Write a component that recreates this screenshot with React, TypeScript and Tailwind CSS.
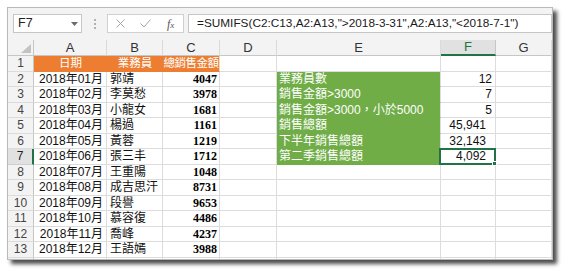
import React from "react";

const rows: [string, string, string][] = [
  ["2018年01月", "郭靖", "4047"],
  ["2018年02月", "李莫愁", "3978"],
  ["2018年03月", "小龍女", "1681"],
  ["2018年04月", "楊過", "1161"],
  ["2018年05月", "黃蓉", "1219"],
  ["2018年06月", "張三丰", "1712"],
  ["2018年07月", "王重陽", "1048"],
  ["2018年08月", "成吉思汗", "8731"],
  ["2018年09月", "段譽", "9653"],
  ["2018年10月", "慕容復", "4486"],
  ["2018年11月", "喬峰", "4237"],
  ["2018年12月", "王語嫣", "3988"],
];

const summary: [string, string, boolean][] = [
  ["業務員數", "12", false],
  ["銷售金額>3000", "7", false],
  ["銷售金額>3000，小於5000", "5", false],
  ["銷售總額", "45,941", true],
  ["下半年銷售總額", "32,143", true],
  ["第二季銷售總額", "4,092", true],
];

const cols = ["A", "B", "C", "D", "E", "F", "G"];

const cell = "border-r border-b border-[#dcdcdc] flex items-center overflow-hidden whitespace-nowrap";

export default function App() {
  const body: React.ReactNode[] = [];
  for (let r = 1; r <= 14; r++) {
    const selRow = r === 7;
    body.push(
      <div
        key={`h${r}`}
        className={
          selRow
            ? "bg-[#e1e1e1] border-b border-[#cfcfcf] border-r-2 border-r-[#217346] flex items-center justify-center text-[12px] text-[#222]"
            : "bg-[#f3f3f3] border-b border-[#dcdcdc] border-r border-r-[#c6c6c6] flex items-center justify-center text-[12px] text-[#444]"
        }
      >
        {r <= 13 ? r : ""}
      </div>
    );
    if (r === 1) {
      body.push(
        <div key="a1" className="bg-[#ed7d31] border-b border-[#ed7d31] flex items-center justify-center text-white text-[11.5px] whitespace-nowrap">日期</div>,
        <div key="b1" className="bg-[#ed7d31] border-b border-[#ed7d31] flex items-center justify-center text-white text-[11.5px] whitespace-nowrap">業務員</div>,
        <div key="c1" className="bg-[#ed7d31] border-b border-[#ed7d31] border-r border-r-[#dcdcdc] flex items-center justify-center text-white text-[11.5px] tracking-[-0.5px] whitespace-nowrap overflow-hidden">總銷售金額</div>
      );
    } else if (r <= 13) {
      const d = rows[r - 2];
      body.push(
        <div key={`a${r}`} className={`${cell} justify-end pr-[3px] text-[12px] text-[#111]`}>{d[0]}</div>,
        <div key={`b${r}`} className={`${cell} pl-[3px] text-[12px] text-[#111]`}>{d[1]}</div>,
        <div key={`c${r}`} className={`${cell} justify-end pr-[2px] text-[12px] font-bold text-black font-['Liberation_Serif',serif]`}>{d[2]}</div>
      );
    } else {
      body.push(
        <div key={`a${r}`} className={cell}></div>,
        <div key={`b${r}`} className={cell}></div>,
        <div key={`c${r}`} className={cell}></div>
      );
    }
    body.push(<div key={`d${r}`} className={cell}></div>);
    if (r >= 2 && r <= 7) {
      const s = summary[r - 2];
      body.push(
        <div key={`e${r}`} className="bg-[#70ad47] border-b border-[#70ad47] border-r border-r-[#dcdcdc] flex items-center pl-[2px] text-white text-[12px] whitespace-nowrap">
          {s[0]}
        </div>
      );
      body.push(
        <div key={`f${r}`} className={`${cell} relative justify-end ${s[2] ? "pr-[9px]" : "pr-[3px]"} text-[12px] text-[#111] overflow-visible`}>
          {s[1]}
          {r === 7 && (
            <div className="absolute -left-[2px] -top-[1px] -right-[1px] -bottom-[1px] border-2 border-[#217346]">
              <div className="absolute -right-[3px] -bottom-[3px] w-[5px] h-[5px] bg-[#217346] border border-white"></div>
            </div>
          )}
        </div>
      );
    } else {
      body.push(<div key={`e${r}`} className={cell}></div>, <div key={`f${r}`} className={cell}></div>);
    }
    body.push(<div key={`g${r}`} className={cell}></div>);
  }

  return (
    <div className="w-[567px] h-[275px] bg-white overflow-hidden pt-[7px] pl-[7px] font-['Liberation_Sans','Noto_Sans_CJK_TC',sans-serif]">
      <div className="w-[546px] h-[253px] border border-[#b9b9b9] bg-white shadow-[4px_4px_4px_rgba(0,0,0,0.7)] overflow-hidden flex flex-col">
        {/* formula bar */}
        <div className="h-[32px] shrink-0 bg-[#f3f3f3] flex items-start pt-[6px] pl-[5px]">
          <div className="w-[69px] h-[19px] bg-white border border-[#c6c6c6] flex items-center justify-between pl-[4px] pr-[3px] text-[12.5px] text-[#222]">
            <span>F7</span>
            <svg width="7" height="4" viewBox="0 0 7 4"><path d="M0 0H7L3.5 4Z" fill="#6b6b6b" /></svg>
          </div>
          <div className="w-[25px] h-[19px] flex flex-col items-center justify-center gap-[2px]">
            <div className="w-[2px] h-[2px] bg-[#b0b0b0]"></div>
            <div className="w-[2px] h-[2px] bg-[#b0b0b0]"></div>
            <div className="w-[2px] h-[2px] bg-[#b0b0b0]"></div>
          </div>
          <div className="w-[77px] h-[19px] bg-white border border-[#d0d0d0] flex items-center">
            <svg className="ml-[8px]" width="9" height="9" viewBox="0 0 9 9">
              <path d="M0.5 0.5L8.5 8.5M8.5 0.5L0.5 8.5" stroke="#a6a6a6" strokeWidth="1" />
            </svg>
            <svg className="ml-[15px]" width="11" height="9" viewBox="0 0 11 9">
              <path d="M0.5 4.5L4 8L10.5 0.5" stroke="#a6a6a6" strokeWidth="1" fill="none" />
            </svg>
            <span className="ml-[16px] font-['Liberation_Serif',serif] italic text-[12px] text-[#555]">
              f<span className="text-[9px]">x</span>
            </span>
          </div>
          <div className="ml-[4px] flex-1 h-[19px] bg-white border border-[#c6c6c6] flex items-center pl-[8px] text-[11.8px] text-[#1a1a1a] whitespace-nowrap overflow-hidden">
            =SUMIFS(C2:C13,A2:A13,"&gt;2018-3-31",A2:A13,"&lt;2018-7-1")
          </div>
        </div>
        {/* grid */}
        <div className="grid grid-cols-[26px_73px_56px_57px_57px_164px_55px_56px] grid-rows-[16px_repeat(14,15.5px)]">
          <div className="bg-[#f3f3f3] border-r border-b border-[#c6c6c6] relative">
            <svg className="absolute right-[2px] bottom-[2px]" width="10" height="9" viewBox="0 0 10 9">
              <path d="M10 0V9H0Z" fill="#c3c3c3" />
            </svg>
          </div>
          {cols.map((c) => (
            <div
              key={c}
              className={
                c === "F"
                  ? "bg-[#e1e1e1] border-r border-[#c6c6c6] border-b-2 border-b-[#217346] flex items-center justify-center text-[13px] text-[#217346]"
                  : "bg-[#f3f3f3] border-r border-[#dadada] border-b border-b-[#c6c6c6] flex items-center justify-center text-[13px] text-[#333]"
              }
            >
              {c}
            </div>
          ))}
          {body}
        </div>
      </div>
    </div>
  );
}
